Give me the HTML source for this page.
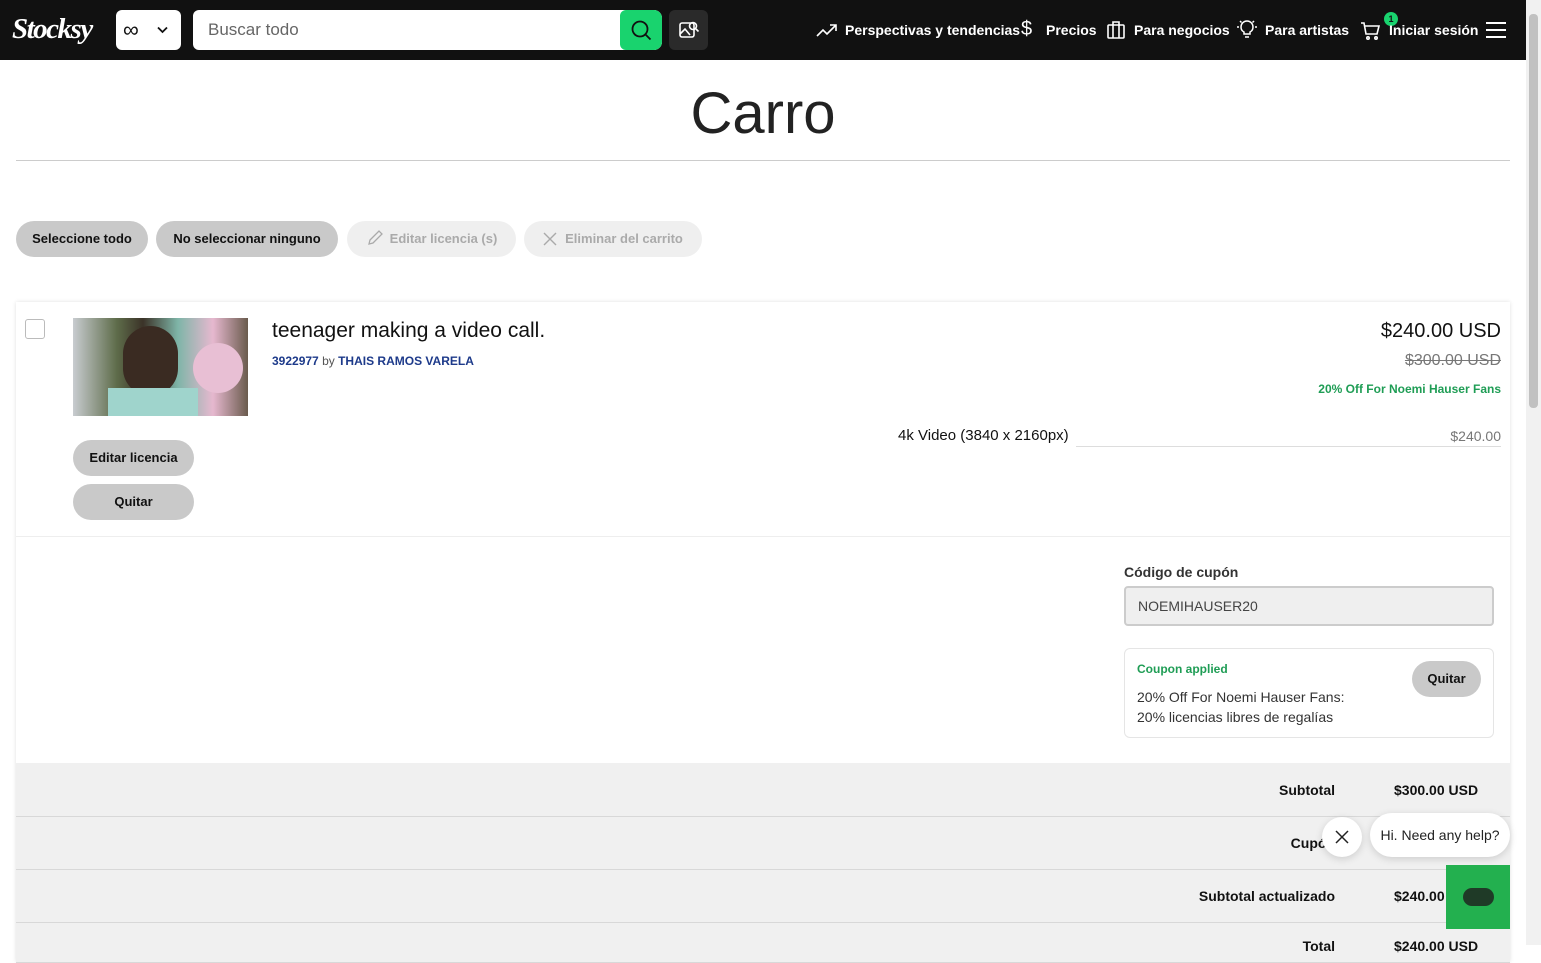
<!DOCTYPE html>
<html><head><meta charset="utf-8"><style>
*{box-sizing:border-box;margin:0;padding:0}
body{width:1541px;height:945px;overflow:hidden;background:#fff;font-family:"Liberation Sans",sans-serif;color:#111;position:relative}
.nav{position:absolute;left:0;top:0;width:1526px;height:60px;background:#111}
.logo{position:absolute;left:12px;top:13px;color:#fff;font:italic bold 29px "Liberation Serif",serif;letter-spacing:-1.5px}
.sel{position:absolute;left:116px;top:10px;width:65px;height:40px;background:#fff;border-radius:6px}
.srch{position:absolute;left:193px;top:10px;width:469px;height:40px;background:#fff;border-radius:6px 8px 8px 6px;overflow:hidden}
.srch span{position:absolute;left:15px;top:10px;color:#666;font-size:17px}
.sbtn{position:absolute;right:0;top:0;width:42px;height:40px;background:#19d36e;border-radius:6px}
.cam{position:absolute;left:669px;top:10px;width:39px;height:40px;background:#2a2a2a;border-radius:6px}
.nl{position:absolute;top:22px;color:#fff;font-size:14px;font-weight:bold}
.sb{position:absolute;left:1526px;top:0;width:15px;height:945px;background:#f1f1f1}
.sb div{position:absolute;left:3px;top:14px;width:9px;height:394px;background:#c1c1c1;border-radius:4px}
h1{position:absolute;left:0;width:1526px;top:80px;text-align:center;font-weight:normal;font-size:58px;color:#222}
.hr{position:absolute;left:16px;top:160px;width:1494px;height:1px;background:#ccc}
.pill{position:absolute;top:221px;height:36px;border-radius:18px;font-size:13px;font-weight:bold;line-height:36px;text-align:center}
.card{position:absolute;left:16px;top:302px;width:1494px;height:660px;background:#fff;box-shadow:0 0 4px rgba(0,0,0,.12)}
.row{position:absolute;left:16px;width:1494px;background:#f0f0f0;border-bottom:1px solid #d8d8d8;font-weight:bold;font-size:14px}
.lab{position:absolute;right:175px}
</style></head><body>
<div class="nav">
<div class="logo">Stocksy</div>
<div class="sel"><span style="position:absolute;left:7px;top:7px;font-size:22px">∞</span><svg style="position:absolute;left:41px;top:16px" width="11" height="8" viewBox="0 0 11 8"><path d="M1 1.5l4.5 4.5 4.5-4.5" stroke="#111" stroke-width="1.8" fill="none"/></svg></div>
<div class="srch"><span>Buscar todo</span><div class="sbtn"><svg style="position:absolute;left:10px;top:9px" width="22" height="22" viewBox="0 0 22 22"><circle cx="10" cy="10" r="7.5" stroke="#111" stroke-width="1.8" fill="none"/><path d="M15.5 15.5l5 5" stroke="#111" stroke-width="1.8"/></svg></div></div>
<div class="cam"><svg style="position:absolute;left:9px;top:9px" width="22" height="22" viewBox="0 0 22 22" fill="none" stroke="#fff" stroke-width="1.6"><rect x="2" y="4" width="14" height="14" rx="2"/><path d="M2 15l5-5 5 6"/><circle cx="15" cy="7" r="3.5"/><path d="M17.5 9.5l3 3"/></svg></div>
<svg style="position:absolute;left:816px;top:22px" width="22" height="16" viewBox="0 0 22 16" fill="none" stroke="#fff" stroke-width="1.6"><path d="M1 14l6-6 4 4 9-9M14 3h6v6"/></svg>
<div class="nl" style="left:845px">Perspectivas y tendencias</div>
<div class="nl" style="left:1021px;top:18px;font-size:20px;font-weight:normal">$</div>
<div class="nl" style="left:1046px">Precios</div>
<svg style="position:absolute;left:1106px;top:20px" width="20" height="20" viewBox="0 0 20 20" fill="none" stroke="#fff" stroke-width="1.6"><rect x="2" y="5" width="16" height="13" rx="1"/><path d="M7 5V2h6v3M7 5v13M13 5v13"/></svg>
<div class="nl" style="left:1134px">Para negocios</div>
<svg style="position:absolute;left:1236px;top:18px" width="22" height="22" viewBox="0 0 22 22" fill="none" stroke="#fff" stroke-width="1.5"><path d="M8 16v-2c-2-1-3-3-3-5a6 6 0 0 1 12 0c0 2-1 4-3 5v2zM9 19h4M1 9h2M19 9h2M4 3l1.5 1.5M18 3l-1.5 1.5"/></svg>
<div class="nl" style="left:1265px">Para artistas</div>
<svg style="position:absolute;left:1360px;top:21px" width="22" height="20" viewBox="0 0 22 20" fill="none" stroke="#fff" stroke-width="1.6"><path d="M1 2h3l2 11h11l2-8H5"/><circle cx="8" cy="17" r="1.2"/><circle cx="16" cy="17" r="1.2"/></svg>
<div style="position:absolute;left:1384px;top:12px;width:14px;height:14px;border-radius:7px;background:#19d36e;color:#111;font-size:9px;text-align:center;line-height:14px;font-weight:bold">1</div>
<div class="nl" style="left:1389px">Iniciar sesión</div>
<svg style="position:absolute;left:1486px;top:21px" width="20" height="18" viewBox="0 0 20 18" stroke="#fff" stroke-width="2"><path d="M0 2h20M0 9h20M0 16h20"/></svg>
</div>
<div class="sb"><div></div></div>
<h1>Carro</h1>
<div class="hr"></div>
<div class="pill" style="left:16px;width:132px;background:#c9c9c9">Seleccione todo</div>
<div class="pill" style="left:156px;width:182px;background:#c9c9c9">No seleccionar ninguno</div>
<div class="pill" style="left:347px;width:169px;background:#efefef;color:#aaa"><svg style="vertical-align:-4px;margin-right:6px" width="18" height="18" viewBox="0 0 18 18" fill="none" stroke="#aaa" stroke-width="1.3"><path d="M3 15l1-4 9-9 3 3-9 9z"/></svg>Editar licencia (s)</div>
<div class="pill" style="left:524px;width:178px;background:#efefef;color:#aaa"><svg style="vertical-align:-3px;margin-right:8px" width="14" height="14" viewBox="0 0 14 14" stroke="#aaa" stroke-width="1.4"><path d="M1 1l12 12M13 1L1 13"/></svg>Eliminar del carrito</div>
<div class="card">
<div style="position:absolute;left:9px;top:17px;width:20px;height:20px;border:1.5px solid #bbb;border-radius:3px"></div>
<div style="position:absolute;left:57px;top:16px;width:175px;height:98px;background:linear-gradient(90deg,#c8ccd0 0%,#5e6c4a 25%,#3b3328 40%,#7fb5a8 60%,#e6b8cf 80%,#6a5b4d 100%)"><div style="position:absolute;left:50px;top:8px;width:55px;height:70px;border-radius:28px;background:#3a2b22"></div><div style="position:absolute;left:120px;top:25px;width:50px;height:50px;border-radius:25px;background:#e8bfd4"></div><div style="position:absolute;left:35px;top:70px;width:90px;height:28px;background:#9fd4cc"></div></div>
<div style="position:absolute;left:256px;top:17px;font-size:21px">teenager making a video call.</div>
<div style="position:absolute;left:256px;top:52px;font-size:12px;font-weight:bold;color:#1d3a8a">3922977 <span style="color:#555;font-weight:normal">by</span> THAIS RAMOS VARELA</div>
<div style="position:absolute;right:9px;top:18px;font-size:20px">$240.00 USD</div>
<div style="position:absolute;right:9px;top:50px;font-size:16px;color:#777;text-decoration:line-through">$300.00 USD</div>
<div style="position:absolute;right:9px;top:80px;font-size:12px;font-weight:bold;color:#1f9d55">20% Off For Noemi Hauser Fans</div>
<div style="position:absolute;left:882px;top:125px;font-size:15px">4k Video (3840 x 2160px)</div>
<div style="position:absolute;right:9px;top:126px;font-size:14px;color:#777">$240.00</div>
<div style="position:absolute;left:1060px;right:9px;top:144px;height:1px;background:#ddd"></div>
<div class="pill" style="left:57px;top:138px;width:121px;background:#c9c9c9">Editar licencia</div>
<div class="pill" style="left:57px;top:182px;width:121px;background:#c9c9c9">Quitar</div>
<div style="position:absolute;left:0;right:0;top:234px;height:1px;background:#eee"></div>
<div style="position:absolute;left:1108px;top:262px;font-size:14px;font-weight:bold;color:#333">Código de cupón</div>
<div style="position:absolute;left:1108px;top:284px;width:370px;height:40px;background:#efefef;border:2px solid #ccc;border-radius:4px;padding:10px 12px;font-size:14px;color:#444">NOEMIHAUSER20</div>
<div style="position:absolute;left:1108px;top:346px;width:370px;height:90px;border:1px solid #e5e5e5;border-radius:6px">
<div style="position:absolute;left:12px;top:13px;font-size:12px;font-weight:bold;color:#1f9d55">Coupon applied</div>
<div style="position:absolute;left:12px;top:38px;font-size:14px;line-height:20px;color:#333">20% Off For Noemi Hauser Fans:<br>20% licencias libres de regalías</div>
<div class="pill" style="left:287px;top:12px;width:69px;background:#c9c9c9">Quitar</div>
</div>
</div>
<div class="row" style="top:763px;height:54px"><span class="lab" style="top:19px">Subtotal</span><span style="position:absolute;left:1378px;top:19px">$300.00 USD</span></div>
<div class="row" style="top:817px;height:53px"><span class="lab" style="top:18px">Cupón</span></div>
<div class="row" style="top:870px;height:53px"><span class="lab" style="top:18px">Subtotal actualizado</span><span style="position:absolute;left:1378px;top:18px">$240.00 USD</span></div>
<div class="row" style="top:923px;height:40px"><span class="lab" style="top:15px">Total</span><span style="position:absolute;left:1378px;top:15px">$240.00 USD</span></div>
<div style="position:absolute;left:1322px;top:817px;width:40px;height:40px;border-radius:20px;background:#fff;box-shadow:0 2px 8px rgba(0,0,0,.15)"><svg style="position:absolute;left:13px;top:13px" width="14" height="14" viewBox="0 0 14 14" stroke="#222" stroke-width="1.5"><path d="M1 1l12 12M13 1L1 13"/></svg></div>
<div style="position:absolute;left:1370px;top:813px;width:140px;height:44px;border-radius:22px;background:#fff;box-shadow:0 2px 8px rgba(0,0,0,.15);font-size:14px;line-height:44px;text-align:center;color:#222">Hi. Need any help?</div>
<div style="position:absolute;left:1446px;top:865px;width:64px;height:64px;background:#23b04f"><div style="position:absolute;left:17px;top:23px;width:31px;height:18px;border-radius:9px;background:#1f3a27"></div></div>
</body></html>
